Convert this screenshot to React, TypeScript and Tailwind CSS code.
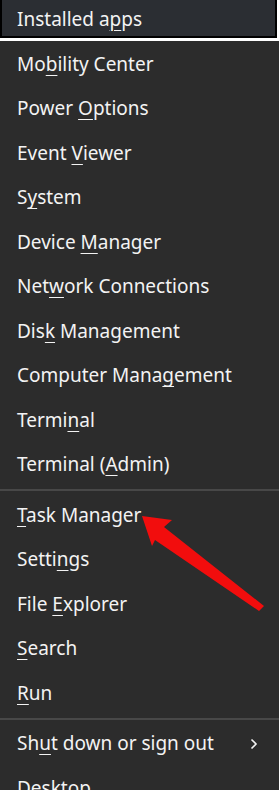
const items: { label: string; key: number; sepBefore?: boolean; submenu?: boolean }[] = [
  { label: "Mobility Center", key: 2 },
  { label: "Power Options", key: 6 },
  { label: "Event Viewer", key: 6 },
  { label: "System", key: 1 },
  { label: "Device Manager", key: 7 },
  { label: "Network Connections", key: 3 },
  { label: "Disk Management", key: 3 },
  { label: "Computer Management", key: 13 },
  { label: "Terminal", key: 5 },
  { label: "Terminal (Admin)", key: 10 },
  { label: "Task Manager", key: 0, sepBefore: true },
  { label: "Settings", key: 5 },
  { label: "File Explorer", key: 5 },
  { label: "Search", key: 0 },
  { label: "Run", key: 0 },
  { label: "Shut down or sign out", key: 2, sepBefore: true, submenu: true },
  { label: "Desktop", key: -1 },
]

function Label({ text, k }: { text: string; k: number }) {
  if (k < 0) return <span>{text}</span>
  return (
    <span>
      {text.slice(0, k)}
      <span className="underline decoration-1 underline-offset-[4px]">{text[k]}</span>
      {text.slice(k + 1)}
    </span>
  )
}

export default function App() {
  return (
    <div
      className="relative w-[279px] h-[790px] overflow-hidden bg-[#2c2c2c] text-[#f3f3f3] text-[19px] leading-none"
      style={{ fontFamily: '"Noto Sans", "Open Sans", sans-serif' }}
    >
      {/* focused first item */}
      <div className="border-b-[3px] border-r-2 border-white">
        <div className="h-[38px] border-b-2 border-l-2 border-r-2 border-black bg-[#2b2e33] flex items-center pl-[15px] pt-[2px]">
          <Label text="Installed apps" k={11} />
        </div>
      </div>

      <div className="flex flex-col pt-[1px]">
        {items.map((it, i) => (
          <div key={i}>
            {it.sepBefore && <div className="h-[2px] bg-[#484848] my-[2px]" />}
            <div className="h-[44.5px] flex items-center justify-between pl-[17px] pr-[21px]">
              <Label text={it.label} k={it.key} />
              {it.submenu && (
                <svg width="8" height="12" viewBox="0 0 8 12" fill="none">
                  <path d="M1.5 1.5 L6 6 L1.5 10.5" stroke="#f3f3f3" strokeWidth="1.6" />
                </svg>
              )}
            </div>
          </div>
        ))}
      </div>

      {/* red arrow annotation */}
      <svg className="absolute left-0 top-0 pointer-events-none" width="279" height="790" viewBox="0 0 279 790">
        <polygon
          points="142,516 172,520 164,527 264,606 259,611 155,540 152,546"
          fill="#f20d0d"
          strokeLinejoin="round"
        />
      </svg>
    </div>
  )
}
